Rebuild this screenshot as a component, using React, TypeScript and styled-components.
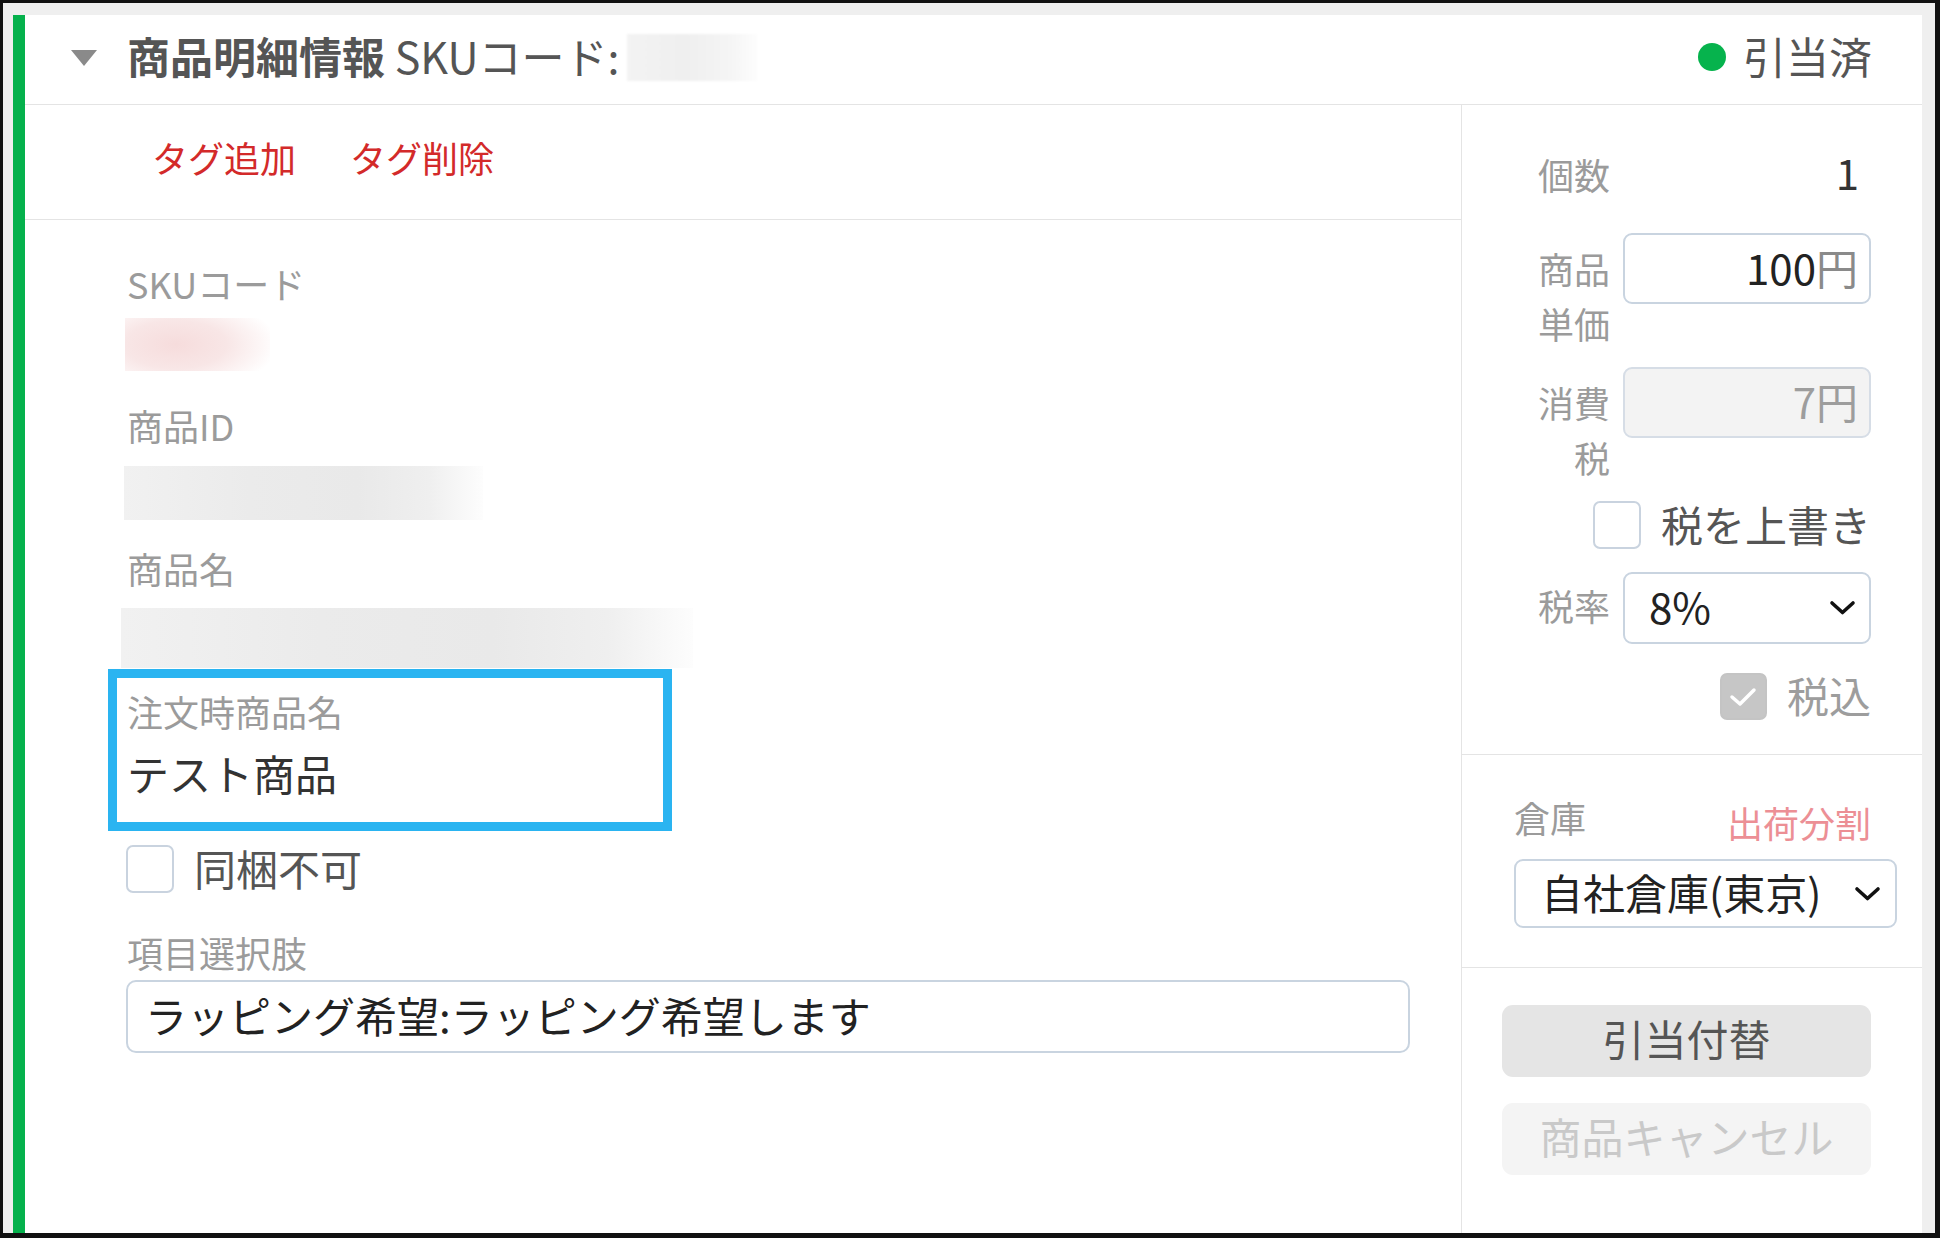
import React from "react";
import styled, { createGlobalStyle } from "styled-components";

const GlobalStyle = createGlobalStyle`
  html, body { margin: 0; padding: 0; background: #fff; }
  body { font-family: "Noto Sans CJK JP", "Noto Sans", sans-serif; }
  *, *::before, *::after { box-sizing: border-box; }
`;

const Frame = styled.div`
  width: 1940px;
  height: 1238px;
  border: 3px solid #111;
  border-right-width: 5px;
  border-bottom-width: 5px;
  background: #efefef;
  padding: 12px 13px 0 10px;
  display: flex;
  overflow: hidden;
`;

const Card = styled.div`
  flex: 1;
  display: flex;
  flex-direction: column;
  background: #fff;
  border-left: 12px solid #05b14c;
`;

const Header = styled.div`
  height: 90px;
  flex: none;
  display: flex;
  align-items: center;
  padding: 0 50px 10px 46px;
  border-bottom: 1px solid #e4e4e4;
  color: #555;
`;

const Caret = styled.span`
  width: 0;
  height: 0;
  border-left: 13px solid transparent;
  border-right: 13px solid transparent;
  border-top: 16px solid #8a8a8a;
  margin-right: 30px;
  margin-top: 7px;
`;

const Title = styled.span`
  font-size: 43px;
  line-height: 60px;
  font-weight: 700;
  white-space: pre;
`;

const TitleSub = styled.span`
  font-size: 43px;
  line-height: 60px;
  font-weight: 400;
  white-space: pre;
`;

const HeaderBlur = styled.span`
  display: inline-block;
  width: 130px;
  height: 47px;
  margin-left: 8px;
  margin-top: 6px;
  background: linear-gradient(90deg, #f3f3f3 0%, #efefef 45%, #f5f5f5 80%, #fdfdfd 100%);
  filter: blur(1px);
`;

const Spacer = styled.div`
  flex: 1;
`;

const StatusDot = styled.span`
  width: 28px;
  height: 28px;
  border-radius: 50%;
  background: #06b34d;
  margin-right: 17px;
  margin-top: 5px;
`;

const StatusText = styled.span`
  font-size: 43px;
  line-height: 60px;
  color: #555;
`;

const Body = styled.div`
  flex: 1;
  display: flex;
`;

const LeftPanel = styled.div`
  flex: 1;
  display: flex;
  flex-direction: column;
`;

const TagBar = styled.div`
  height: 115px;
  flex: none;
  display: flex;
  align-items: flex-start;
  gap: 54px;
  padding: 22px 0 0 127px;
  border-bottom: 1px solid #e4e4e4;
`;

const TagLink = styled.span`
  font-size: 36px;
  line-height: 60px;
  color: #d32a2a;
`;

const Fields = styled.div`
  display: flex;
  flex-direction: column;
  align-items: flex-start;
  padding: 38px 51px 0 102px;
`;

const Label = styled.div<{ $mt?: number }>`
  font-size: 36px;
  line-height: 50px;
  height: 50px;
  color: #9b9b9b;
  margin-top: ${(p) => p.$mt ?? 0}px;
  white-space: nowrap;
`;

const Blur = styled.div<{
  $w: number;
  $h: number;
  $mt: number;
  $ml: number;
  $tone: "pink" | "gray";
}>`
  width: ${(p) => p.$w}px;
  height: ${(p) => p.$h}px;
  margin-top: ${(p) => p.$mt}px;
  margin-left: ${(p) => p.$ml}px;
  background: ${(p) =>
    p.$tone === "pink"
      ? "radial-gradient(ellipse 70% 90% at 35% 50%, #f6dcdc 0%, #f8e6e6 50%, #fdf7f7 85%, #fff 100%)"
      : "linear-gradient(90deg, #f1f1f1 0%, #ebebeb 35%, #e9e9e9 65%, #efefef 85%, #fdfdfd 100%)"};
`;

const Highlight = styled.div`
  width: 564px;
  margin: 1px 0 0 -19px;
  border: 9px solid #2ab4f1;
  padding: 8px 10px 19px 10px;
`;

const Value = styled.div`
  font-size: 42px;
  line-height: 60px;
  color: #333;
  margin-top: 7px;
`;

const CheckRow = styled.div<{ $mt: number; $ml?: number; $h: number }>`
  display: flex;
  align-items: center;
  height: ${(p) => p.$h}px;
  margin-top: ${(p) => p.$mt}px;
  margin-left: ${(p) => p.$ml ?? 0}px;
  gap: 20px;
`;

const Box = styled.span<{ $size: number; $checked?: boolean }>`
  width: ${(p) => p.$size}px;
  height: ${(p) => p.$size}px;
  border-radius: 7px;
  border: 2px solid ${(p) => (p.$checked ? "#c4c4c4" : "#c9d3df")};
  background: ${(p) => (p.$checked ? "#c6c6c6" : "#fff")};
  display: flex;
  align-items: center;
  justify-content: center;
  flex: none;
`;

const CheckText = styled.span<{ $muted?: boolean }>`
  font-size: 42px;
  line-height: 50px;
  margin-top: -3px;
  color: ${(p) => (p.$muted ? "#9d9d9d" : "#555")};
  white-space: nowrap;
`;

const TextInput = styled.div`
  align-self: stretch;
  height: 73px;
  margin: 3px 0 0 -1px;
  border: 2px solid #c9d4e0;
  border-radius: 10px;
  padding: 0 0 4px 17px;
  display: flex;
  align-items: center;
  font-size: 42px;
  color: #222;
  white-space: nowrap;
`;

const RightPanel = styled.div`
  width: 461px;
  flex: none;
  border-left: 1px solid #e4e4e4;
  display: flex;
  flex-direction: column;
`;

const PriceSection = styled.div`
  display: flex;
  flex-direction: column;
  align-items: flex-end;
  padding: 39px 51px 34px 0;
  border-bottom: 1px solid #e4e4e4;
`;

const FormRow = styled.div<{ $mt: number }>`
  display: flex;
  align-items: flex-start;
  gap: 13px;
  margin-top: ${(p) => p.$mt}px;
`;

const RowLabel = styled.div<{ $lh: number; $pt?: number }>`
  width: 80px;
  text-align: right;
  font-size: 36px;
  line-height: ${(p) => p.$lh}px;
  padding-top: ${(p) => p.$pt ?? 0}px;
  color: #9b9b9b;
  word-break: break-all;
`;

const PlainValue = styled.div`
  width: 248px;
  height: 60px;
  line-height: 56px;
  text-align: right;
  padding-right: 12px;
  font-size: 42px;
  color: #333;
`;

const AmountInput = styled.div<{ $disabled?: boolean }>`
  width: 248px;
  height: 71px;
  border: 2px solid ${(p) => (p.$disabled ? "#d6dde6" : "#c9d4e0")};
  border-radius: 9px;
  background: ${(p) => (p.$disabled ? "#f3f3f3" : "#fff")};
  display: flex;
  align-items: center;
  justify-content: flex-end;
  padding: 0 11px 4px 0;
  font-size: 42px;
  color: ${(p) => (p.$disabled ? "#9d9d9d" : "#222")};
`;

const Unit = styled.span`
  color: #8a8a8a;
`;

const SelectBox = styled.div<{ $w?: number; $h: number; $pl: number; $pr: number }>`
  width: ${(p) => (p.$w ? `${p.$w}px` : "auto")};
  align-self: stretch;
  height: ${(p) => p.$h}px;
  border: 2px solid #c9d4e0;
  border-radius: 9px;
  display: flex;
  align-items: center;
  justify-content: space-between;
  padding: 0 ${(p) => p.$pr}px 0 ${(p) => p.$pl}px;
  font-size: 42px;
  color: #222;
  background: #fff;
  white-space: nowrap;
`;

const SelectText = styled.span`
  margin-top: -5px;
`;

const WarehouseSection = styled.div`
  display: flex;
  flex-direction: column;
  padding: 37px 25px 39px 52px;
  border-bottom: 1px solid #e4e4e4;
`;

const WarehouseHead = styled.div`
  display: flex;
  justify-content: space-between;
  align-items: flex-start;
  height: 50px;
  margin-bottom: 17px;
`;

const SplitLink = styled.span`
  font-size: 36px;
  line-height: 60px;
  padding-right: 26px;
  color: #ec8f95;
`;

const ActionSection = styled.div`
  display: flex;
  flex-direction: column;
  gap: 26px;
  padding: 37px 51px 0 40px;
`;

const ActionButton = styled.button<{ $disabled?: boolean }>`
  height: 72px;
  border: none;
  border-radius: 11px;
  font-family: inherit;
  font-size: 42px;
  line-height: 60px;
  background: ${(p) => (p.$disabled ? "#f4f4f4" : "#e5e5e5")};
  color: ${(p) => (p.$disabled ? "#c9c9c9" : "#555")};
  padding: 0 0 6px;
`;

const Chevron = () => (
  <svg width="27" height="16" viewBox="0 0 27 16">
    <polyline
      points="3,3 13.5,12.5 24,3"
      fill="none"
      stroke="#111"
      strokeWidth="3.6"
      strokeLinecap="round"
      strokeLinejoin="round"
    />
  </svg>
);

const Check = () => (
  <svg width="30" height="24" viewBox="0 0 30 24">
    <polyline
      points="4,12 12,19 26,5"
      fill="none"
      stroke="#fff"
      strokeWidth="3.5"
      strokeLinecap="round"
      strokeLinejoin="round"
    />
  </svg>
);

export default function App() {
  return (
    <>
      <GlobalStyle />
      <Frame>
        <Card>
          <Header>
            <Caret />
            <Title>商品明細情報</Title>
            <TitleSub> SKUコード:</TitleSub>
            <HeaderBlur />
            <Spacer />
            <StatusDot />
            <StatusText>引当済</StatusText>
          </Header>
          <Body>
            <LeftPanel>
              <TagBar>
                <TagLink>タグ追加</TagLink>
                <TagLink>タグ削除</TagLink>
              </TagBar>
              <Fields>
                <Label>SKUコード</Label>
                <Blur $tone="pink" $w={145} $h={53} $mt={10} $ml={-2} />
                <Label $mt={29}>商品ID</Label>
                <Blur $tone="gray" $w={359} $h={54} $mt={16} $ml={-3} />
                <Label $mt={23}>商品名</Label>
                <Blur $tone="gray" $w={572} $h={60} $mt={15} $ml={-6} />
                <Highlight>
                  <Label>注文時商品名</Label>
                  <Value>テスト商品</Value>
                </Highlight>
                <CheckRow $mt={14} $ml={-1} $h={48}>
                  <Box $size={48} />
                  <CheckText>同梱不可</CheckText>
                </CheckRow>
                <Label $mt={34}>項目選択肢</Label>
                <TextInput>ラッピング希望:ラッピング希望します</TextInput>
              </Fields>
            </LeftPanel>
            <RightPanel>
              <PriceSection>
                <FormRow $mt={0}>
                  <RowLabel $lh={60}>個数</RowLabel>
                  <PlainValue>1</PlainValue>
                </FormRow>
                <FormRow $mt={29}>
                  <RowLabel $lh={55} $pt={8}>
                    商品単価
                  </RowLabel>
                  <AmountInput>
                    100<Unit>円</Unit>
                  </AmountInput>
                </FormRow>
                <FormRow $mt={16}>
                  <RowLabel $lh={55} $pt={8}>
                    消費税
                  </RowLabel>
                  <AmountInput $disabled>7円</AmountInput>
                </FormRow>
                <CheckRow $mt={15} $h={50}>
                  <Box $size={48} />
                  <CheckText>税を上書き</CheckText>
                </CheckRow>
                <FormRow $mt={22}>
                  <RowLabel $lh={66}>税率</RowLabel>
                  <SelectBox $w={248} $h={72} $pl={24} $pr={13}>
                    <SelectText>8%</SelectText>
                    <Chevron />
                  </SelectBox>
                </FormRow>
                <CheckRow $mt={29} $h={47}>
                  <Box $size={47} $checked>
                    <Check />
                  </Box>
                  <CheckText $muted>税込</CheckText>
                </CheckRow>
              </PriceSection>
              <WarehouseSection>
                <WarehouseHead>
                  <Label>倉庫</Label>
                  <SplitLink>出荷分割</SplitLink>
                </WarehouseHead>
                <SelectBox $h={69} $pl={25} $pr={14}>
                  <SelectText>自社倉庫(東京)</SelectText>
                  <Chevron />
                </SelectBox>
              </WarehouseSection>
              <ActionSection>
                <ActionButton>引当付替</ActionButton>
                <ActionButton $disabled>商品キャンセル</ActionButton>
              </ActionSection>
            </RightPanel>
          </Body>
        </Card>
      </Frame>
    </>
  );
}
